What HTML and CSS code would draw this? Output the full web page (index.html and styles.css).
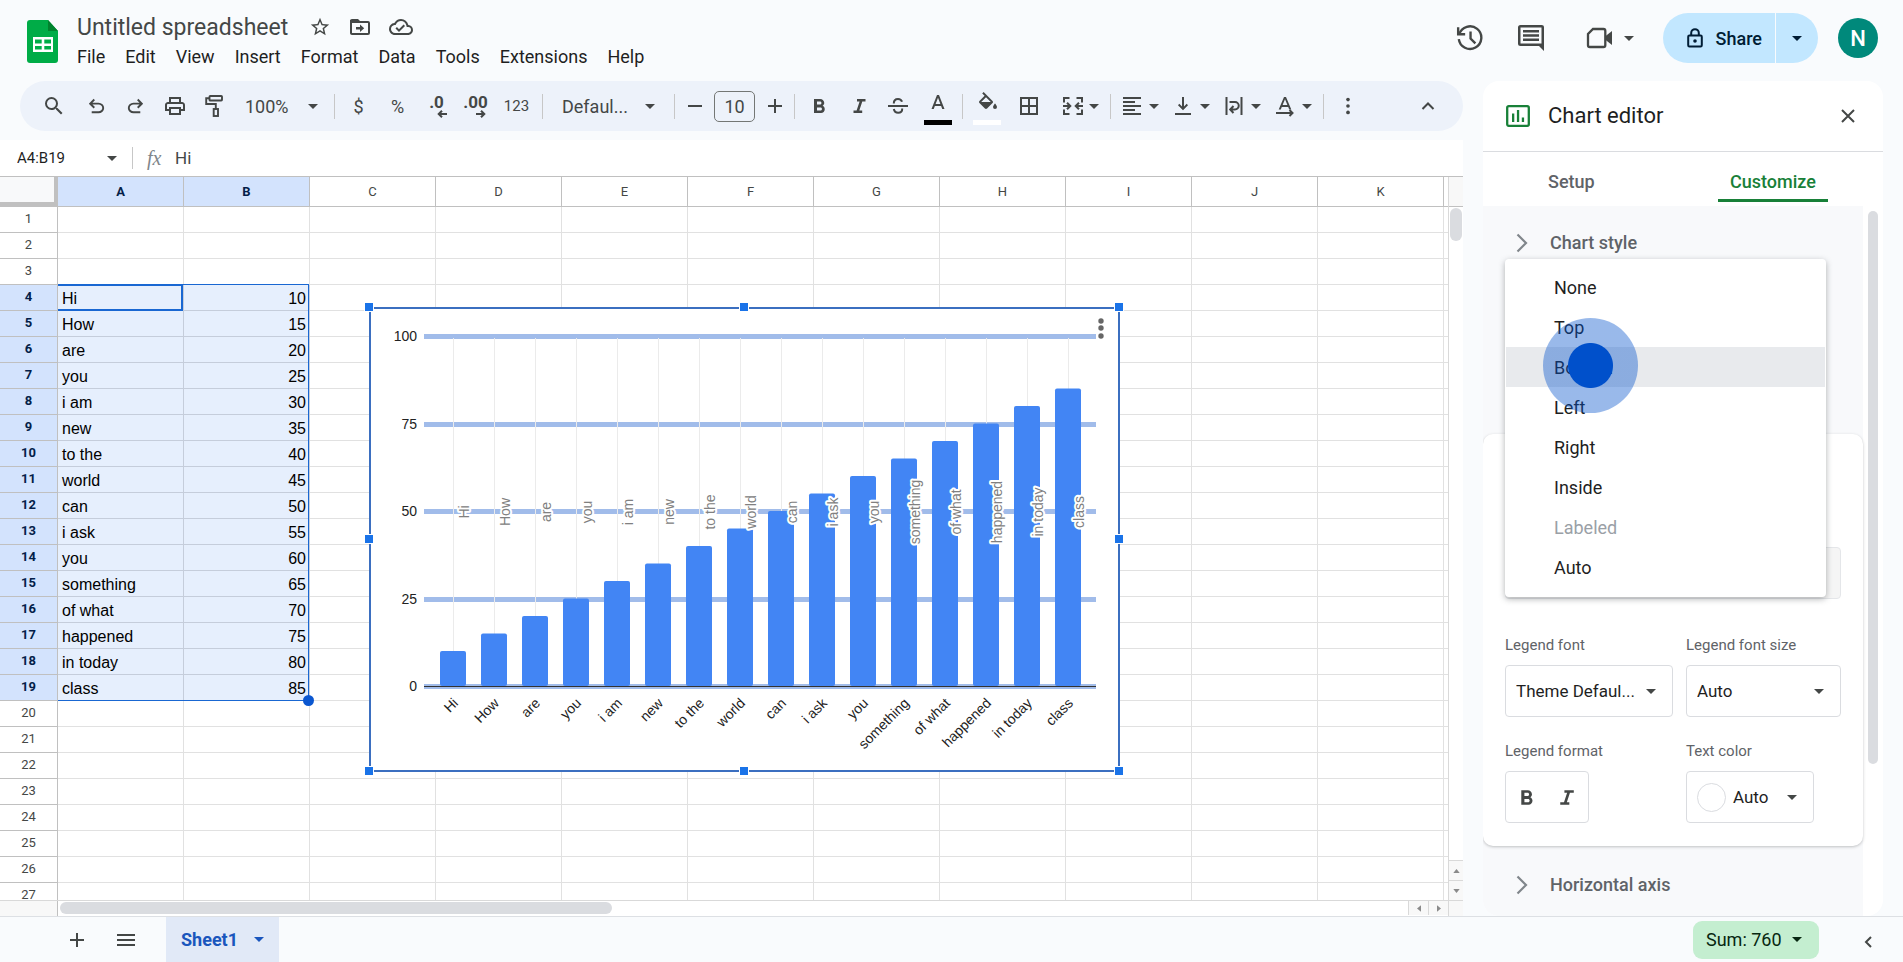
FILE: index.html
```html
<!DOCTYPE html>
<html lang="en">
<head>
  <meta charset="UTF-8">
  <meta name="viewport" content="width=device-width, initial-scale=1.0">
  <title>Untitled spreadsheet</title>
  <link rel="stylesheet" href="styles.css">
</head>
<body>
  <header class="topbar">
    <svg class="logo" viewBox="0 0 31 43" aria-hidden="true">
      <path d="M3 0h18l10 11v29a3 3 0 0 1-3 3H3a3 3 0 0 1-3-3V3a3 3 0 0 1 3-3z" fill="#00ac47"/>
      <path d="M21 0l10 11H21z" fill="#00832d"/>
      <path fill-rule="evenodd" d="M6 17h20v15H6zM8 19.500v4h6.700v-4zM17.300 19.500v4H24v-4zM8 26v3.500h6.700V26zM17.300 26v3.500H24V26z" fill="#fff"/>
    </svg>
    <div class="doc">
      <div class="doc-title">
        <h1>Untitled spreadsheet</h1>
        <button class="icon-btn" aria-label="Star"><svg viewBox="0 0 24 24" width="22" height="22"><path d="M22 9.240l-7.190-.62L12 2 9.190 8.630 2 9.240l5.460 4.730L5.820 21 12 17.270 18.180 21l-1.630-7.030L22 9.240zM12 15.400l-3.760 2.270 1-4.280-3.320-2.880 4.380-.38L12 6.100l1.710 4.040 4.380.38-3.320 2.880 1 4.280L12 15.400z"/></svg></button>
        <button class="icon-btn" aria-label="Move"><svg viewBox="0 0 24 24" width="24" height="24"><path d="M20 6h-8l-2-2H4a2 2 0 0 0-2 2v12c0 1.100.9 2 2 2h16a2 2 0 0 0 2-2V8a2 2 0 0 0-2-2zm0 12H4V8h16v10z"/><path d="M2 5h8v3H2zM8 12h4V9.500l4.200 3.700L12 17v-2.600H8z"/></svg></button>
        <button class="icon-btn" aria-label="Saved to Drive"><svg viewBox="0 0 24 24" width="24" height="24"><path d="M19.350 10.040A7.490 7.490 0 0 0 12 4C9.110 4 6.600 5.640 5.350 8.040A5.994 5.994 0 0 0 0 14c0 3.310 2.690 6 6 6h13c2.760 0 5-2.240 5-5 0-2.640-2.050-4.780-4.650-4.960zM19 18H6c-2.210 0-4-1.790-4-4 0-2.050 1.530-3.760 3.560-3.970l1.070-.11.5-.95A5.469 5.469 0 0 1 12 6c2.620 0 4.880 1.860 5.390 4.430l.3 1.500 1.530.11A2.980 2.980 0 0 1 22 15c0 1.650-1.350 3-3 3zm-9-3.820l-2.090-2.090L6.500 13.500 10 17l6.010-6.010-1.410-1.410z"/></svg></button>
      </div>
      <nav class="menus">
        <button>File</button>
        <button>Edit</button>
        <button>View</button>
        <button>Insert</button>
        <button>Format</button>
        <button>Data</button>
        <button>Tools</button>
        <button>Extensions</button>
        <button>Help</button>
      </nav>
    </div>
    <div class="actions">
      <button class="icon-btn" aria-label="Version history"><svg viewBox="0 0 26 26" width="28" height="28"><g fill="none" stroke="#444746" stroke-width="2.200"><path d="M3 9.500A10.500 10.500 0 1 1 2.600 14"/><path d="M2 3v6.500h6.500"/><path d="M13.500 7v6.500l4.500 4.500"/></g></svg></button>
      <button class="icon-btn comments" aria-label="Comments"><svg viewBox="0 0 26 26" width="26" height="26"><path fill-rule="evenodd" d="M2.500 0h21A2.500 2.500 0 0 1 26 2.500V26l-5-5H2.500A2.500 2.500 0 0 1 0 18.500v-16A2.500 2.500 0 0 1 2.500 0zm0 2.500v16h21v-16z"/><path d="M5 5h16v2.400H5zM5 9.300h16v2.400H5zM5 13.600h16V16H5z"/></svg></button>
      <button class="icon-btn meet" aria-label="Join a call"><svg viewBox="0 0 26 22" width="26" height="22"><path d="M7 2h10.500A1.800 1.800 0 0 1 19.300 3.800v14.400a1.800 1.800 0 0 1-1.800 1.800H3.800A1.800 1.800 0 0 1 2 18.200V7z" fill="none" stroke="#444746" stroke-width="2.300"/><path d="M19 9.500l7-5.500v14l-7-5.500z"/></svg><span class="caret"></span></button>
      <div class="share">
        <button class="share-main"><svg viewBox="0 0 16 20" width="16" height="20" aria-hidden="true"><rect x="1.200" y="7.500" width="13.600" height="11" rx="1.200" fill="none" stroke="#001d35" stroke-width="2"/><path d="M4.200 7V5a3.800 3.800 0 0 1 7.600 0v2" fill="none" stroke="#001d35" stroke-width="2"/><circle cx="8" cy="13" r="1.800" fill="#001d35"/></svg>Share</button>
        <button class="share-more" aria-label="Share options"><span class="caret"></span></button>
      </div>
      <button class="avatar">N</button>
    </div>
  </header>

  <main class="workspace">
    <section class="editor">
      <div class="toolbar">
        <button class="tool search" aria-label="Search"><svg viewBox="0 0 24 24" width="24" height="24"><path d="M15.500 14h-.79l-.28-.27A6.470 6.470 0 0 0 16 9.500 6.500 6.500 0 1 0 9.500 16c1.610 0 3.090-.59 4.230-1.570l.27.28v.79l5 4.990L20.490 19l-4.990-5zm-6 0a4.500 4.500 0 1 1 0-9 4.500 4.500 0 0 1 0 9z"/></svg></button>
        <button class="tool" aria-label="Undo"><svg viewBox="0 0 24 24" width="23" height="23"><path d="M7 19v-2h7.100q1.575 0 2.738-1T18 13.500t-1.162-2.500T14.100 10H7.800l2.600 2.600L9 14 4 9l5-5 1.400 1.400L7.800 8h6.300q2.425 0 4.163 1.575T20 13.500t-1.737 3.925T14.100 19Z"/></svg></button>
        <button class="tool" aria-label="Redo"><svg viewBox="0 0 24 24" width="23" height="23"><path d="M17 19v-2H9.900q-1.575 0-2.738-1T6 13.500 7.162 11 9.900 10h6.300l-2.600 2.600L15 14l5-5-5-5-1.400 1.400L16.200 8H9.900Q7.475 8 5.737 9.575T4 13.500t1.737 3.925T9.900 19Z"/></svg></button>
        <button class="tool" aria-label="Print"><svg viewBox="0 0 24 24" width="24" height="24"><path d="M19 8h-1V3H6v5H5c-1.660 0-3 1.340-3 3v6h4v4h12v-4h4v-6c0-1.660-1.340-3-3-3zM8 5h8v3H8V5zm8 12v2H8v-4h8v2zm2-2v-2H6v2H4v-4c0-.55.45-1 1-1h14c.55 0 1 .45 1 1v4h-2z"/></svg></button>
        <button class="tool" aria-label="Paint format"><svg viewBox="0 0 18 22" width="18" height="22"><g fill="none" stroke="#444746" stroke-width="1.900"><rect x="4.500" y="1" width="12.500" height="4.500" rx=".8"/><path d="M4.500 3.200H1.200V9h9.600v5"/><rect x="8.700" y="14" width="4.300" height="7"/></g></svg></button>
        <label class="pick zoom"><select aria-label="Zoom"><option>100%</option></select><span class="caret"></span></label>
        <i class="sep"></i>
        <button class="tool" aria-label="Currency">$</button>
        <button class="tool" aria-label="Percent">%</button>
        <button class="tool dec" aria-label="Decrease decimals"><b>.0</b><svg viewBox="0 0 10 8" width="10" height="8"><path d="M10 4H2M5 .7L1.700 4 5 7.300" fill="none" stroke="#444746" stroke-width="2"/></svg></button>
        <button class="tool dec" aria-label="Increase decimals"><b>.00</b><svg viewBox="0 0 10 8" width="10" height="8"><path d="M0 4h8M5 .7L8.300 4 5 7.300" fill="none" stroke="#444746" stroke-width="2"/></svg></button>
        <button class="tool formats" aria-label="More formats">123</button>
        <i class="sep"></i>
        <label class="pick font"><select aria-label="Font"><option>Defaul...</option></select><span class="caret"></span></label>
        <i class="sep"></i>
        <button class="tool step" aria-label="Smaller"><svg viewBox="0 0 14 14" width="14" height="14"><path d="M0 6h14v2H0z"/></svg></button>
        <input class="font-size" type="text" value="10" aria-label="Font size">
        <button class="tool step" aria-label="Larger"><svg viewBox="0 0 14 14" width="14" height="14"><path d="M0 6h6V0h2v6h6v2H8v6H6V8H0z"/></svg></button>
        <i class="sep"></i>
        <button class="tool wide" aria-label="Bold"><svg viewBox="0 0 24 24" width="24" height="24"><path d="M15.600 11.790c.97-.67 1.650-1.770 1.650-2.790 0-2.260-1.750-4-4-4H7v14h7.040c2.090 0 3.710-1.700 3.710-3.790 0-1.520-.86-2.820-2.150-3.420zM10 7.500h3c.83 0 1.500.67 1.500 1.500s-.67 1.500-1.500 1.500h-3v-3zm3.500 9H10v-3h3.500c.83 0 1.500.67 1.500 1.500s-.67 1.500-1.500 1.500z"/></svg></button>
        <button class="tool" aria-label="Italic"><svg viewBox="0 0 24 24" width="24" height="24"><path d="M10 5v2.400h2.600l-3 9.200H6.500V19h8.700v-2.400h-2.900l3-9.200h3.200V5z"/></svg></button>
        <button class="tool wide" aria-label="Strikethrough"><svg viewBox="0 0 24 24" width="24" height="24"><g fill="none" stroke="#444746" stroke-width="2"><path d="M2 12h20"/><path d="M7.800 9.500C7.800 6.500 9.500 5 12 5c2.200 0 3.500 1 4 2.800M7.800 15c.5 2.500 2 3.800 4.400 3.800 2.600 0 4.200-1.500 4-4.300"/></g></svg></button>
        <button class="tool wide color-tool" aria-label="Text color"><svg viewBox="0 0 24 24" width="24" height="24"><path d="M11 3L5.500 17h2.250l1.120-3h6.250l1.120 3h2.250L13 3h-2zm-1.380 9L12 5.670 14.380 12H9.620z"/></svg><span class="swatch black"></span></button>
        <i class="sep"></i>
        <button class="tool fill color-tool" aria-label="Fill color"><svg viewBox="0 0 24 24" width="24" height="24"><path d="M16.560 8.940L7.620 0 6.210 1.410l2.380 2.380-5.150 5.150a1.490 1.490 0 0 0 0 2.120l5.500 5.500c.29.29.68.44 1.060.44s.77-.15 1.060-.44l5.500-5.500c.59-.58.59-1.530 0-2.120zM5.210 10L10 5.210 14.790 10H5.210zM19 11.500s-2 2.170-2 3.500a2 2 0 0 0 4 0c0-1.330-2-3.500-2-3.500z"/></svg><span class="swatch white"></span></button>
        <button class="tool" aria-label="Borders"><svg viewBox="0 0 24 24" width="24" height="24"><path d="M3 3v18h18V3H3zm8 16H5v-6h6v6zm0-8H5V5h6v6zm8 8h-6v-6h6v6zm0-8h-6V5h6v6z"/></svg></button>
        <button class="tool drop merge" aria-label="Merge cells"><svg viewBox="0 0 24 24" width="24" height="24"><g fill="none" stroke="#444746" stroke-width="2"><path d="M8.500 4H3v4.500M8.500 20H3v-4.500M15.500 4H21v4.500M15.500 20H21v-4.500M2 12h7M22 12h-7M6 8.700L9.300 12 6 15.300M18 8.700L14.700 12l3.300 3.300"/></g></svg><span class="caret"></span></button>
        <i class="sep"></i>
        <button class="tool drop" aria-label="Horizontal align"><svg viewBox="0 0 24 24" width="24" height="24"><path d="M3 3h18v2H3zM3 7h12v2H3zM3 11h18v2H3zM3 15h12v2H3zM3 19h18v2H3z"/></svg><span class="caret"></span></button>
        <button class="tool drop" aria-label="Vertical align"><svg viewBox="0 0 24 24" width="24" height="24"><path d="M4 19h16v2H4zM11 3h2v9.500l2.700-2.700 1.300 1.400-5 5-5-5 1.300-1.400 2.700 2.700z"/></svg><span class="caret"></span></button>
        <button class="tool drop" aria-label="Text wrapping"><svg viewBox="0 0 24 24" width="24" height="24"><g fill="none" stroke="#444746" stroke-width="2"><path d="M4.500 3v18M19.500 3v18M7.500 8h5.500a3.500 3.500 0 0 1 0 7.500h-4M11.500 12l-3.300 3.500 3.300 3.500"/></g></svg><span class="caret"></span></button>
        <button class="tool drop" aria-label="Text rotation"><svg viewBox="0 0 24 24" width="24" height="24"><path d="M11 3L5.700 15.500h2.100l1-2.600h6.400l1 2.600h2.100L13 3zm-1.400 8L12 5.300 14.400 11z"/><path d="M3 19h16M16.500 16l3 3-3 3" fill="none" stroke="#444746" stroke-width="2"/></svg><span class="caret"></span></button>
        <i class="sep"></i>
        <button class="tool" aria-label="More"><svg viewBox="0 0 24 24" width="22" height="22"><circle cx="12" cy="5" r="2"/><circle cx="12" cy="12" r="2"/><circle cx="12" cy="19" r="2"/></svg></button>
        <button class="tool collapse" aria-label="Hide the menus"><svg viewBox="0 0 24 24" width="24" height="24"><path d="M6.500 15L12 9.500l5.500 5.500" fill="none" stroke="#444746" stroke-width="2"/></svg></button>
      </div>

      <div class="formula">
        <input class="name-box" type="text" value="A4:B19" aria-label="Name box">
        <span class="caret"></span>
        <i class="sep"></i>
        <span class="fx">fx</span>
        <input class="formula-input" type="text" value="Hi" aria-label="Formula">
      </div>

      <div class="grid-area">
        <div class="grid">
          <table class="cells">
            <thead><tr id="headRow"><th class="corner"></th></tr></thead>
            <tbody id="bodyRows"></tbody>
          </table>
          <div class="range"><span class="fill-handle"></span></div>
          <div class="active-cell"></div>
          <div class="chart">
            <svg id="chartSvg" viewBox="0 0 747 461" width="747" height="461" role="img" aria-label="Column chart"></svg>
            <span class="handle tl"></span><span class="handle tc"></span><span class="handle tr"></span>
            <span class="handle ml"></span><span class="handle mr"></span>
            <span class="handle bl"></span><span class="handle bc"></span><span class="handle br"></span>
          </div>
        </div>
        <div class="vscroll">
          <div class="vscroll-head"></div>
          <div class="vscroll-track"><div class="vthumb"></div></div>
          <button class="scroll-btn" aria-label="Scroll up"><svg viewBox="0 0 8 5" width="7" height="4"><path d="M0 5l4-5 4 5z"/></svg></button>
          <button class="scroll-btn" aria-label="Scroll down"><svg viewBox="0 0 8 5" width="7" height="4"><path d="M0 0l4 5 4-5z"/></svg></button>
        </div>
      </div>
      <div class="hscroll">
        <div class="hscroll-head"></div>
        <div class="hscroll-track"><div class="hthumb"></div></div>
        <button class="scroll-btn" aria-label="Scroll left"><svg viewBox="0 0 5 8" width="4" height="7"><path d="M5 0v8L0 4z"/></svg></button>
        <button class="scroll-btn" aria-label="Scroll right"><svg viewBox="0 0 5 8" width="4" height="7"><path d="M0 0v8l5-4z"/></svg></button>
        <div class="hscroll-end"></div>
      </div>
    </section>

    <aside class="panel">
      <div class="panel-head">
        <svg viewBox="0 0 24 22" width="24" height="22" aria-hidden="true"><rect x="1.200" y="1.200" width="21.600" height="19.600" rx="1.500" fill="none" stroke="#188038" stroke-width="2.300"/><path d="M6 8.500h2.300V17H6zM10.900 5h2.300v12h-2.300zM15.800 12.500h2.300V17h-2.300z" fill="#188038"/></svg>
        <h2>Chart editor</h2>
        <button class="icon-btn close" aria-label="Close"><svg viewBox="0 0 14 14" width="14" height="14"><path d="M1 1l12 12M13 1L1 13" fill="none" stroke="#444746" stroke-width="2"/></svg></button>
      </div>
      <div class="tabs">
        <button class="tab">Setup</button>
        <button class="tab selected">Customize</button>
      </div>
      <div class="panel-body">
        <div class="sections">
          <button class="section-row chart-style"><svg viewBox="0 0 12 20" width="12" height="20"><path d="M1.500 1.500L10 10l-8.500 8.500" fill="none" stroke="#80868b" stroke-width="2.200"/></svg>Chart style</button>
          <div class="legend-card">
            <div class="position-field">
              <select aria-label="Position" disabled><option></option></select>
              <div class="menu" role="listbox">
                <button role="option">None</button>
                <button role="option">Top</button>
                <button role="option" class="hover">Bottom</button>
                <button role="option">Left</button>
                <button role="option">Right</button>
                <button role="option">Inside</button>
                <button role="option" disabled>Labeled</button>
                <button role="option">Auto</button>
                <span class="click-mark"></span>
              </div>
            </div>
            <div class="fields">
              <div class="field">
                <label for="legendFont">Legend font</label>
                <div class="box"><select id="legendFont"><option>Theme Defaul...</option></select><span class="caret"></span></div>
              </div>
              <div class="field">
                <label for="legendSize">Legend font size</label>
                <div class="box"><select id="legendSize"><option>Auto</option></select><span class="caret"></span></div>
              </div>
              <div class="field">
                <span class="field-label">Legend format</span>
                <div class="box format-box">
                  <button class="icon-btn" aria-label="Bold"><svg viewBox="0 0 24 24" width="25" height="25"><path d="M15.600 11.790c.97-.67 1.650-1.770 1.650-2.790 0-2.260-1.750-4-4-4H7v14h7.040c2.090 0 3.710-1.700 3.710-3.790 0-1.520-.86-2.820-2.150-3.420zM10 7.500h3c.83 0 1.500.67 1.500 1.500s-.67 1.500-1.500 1.500h-3v-3zm3.500 9H10v-3h3.500c.83 0 1.500.67 1.500 1.500s-.67 1.500-1.500 1.500z"/></svg></button>
                  <button class="icon-btn" aria-label="Italic"><svg viewBox="0 0 24 24" width="25" height="25"><path d="M10 5v2.400h2.600l-3 9.200H6V19h8.700v-2.400h-2.400l3-9.200h3.700V5z"/></svg></button>
                </div>
              </div>
              <div class="field">
                <span class="field-label">Text color</span>
                <button class="box color-box"><span class="circle"></span>Auto<span class="caret"></span></button>
              </div>
            </div>
          </div>
          <button class="section-row"><svg viewBox="0 0 12 20" width="12" height="20"><path d="M1.500 1.500L10 10l-8.500 8.500" fill="none" stroke="#80868b" stroke-width="2.200"/></svg>Horizontal axis</button>
        </div>
        <div class="panel-scroll"><div class="panel-thumb"></div></div>
      </div>
    </aside>
  </main>

  <footer class="sheetbar">
    <button class="icon-btn" aria-label="Add sheet"><svg viewBox="0 0 14 14" width="14" height="14"><path d="M0 6h6V0h2v6h6v2H8v6H6V8H0z"/></svg></button>
    <button class="icon-btn" aria-label="All sheets"><svg viewBox="0 0 18 12" width="18" height="12"><path d="M0 0h18v2H0zM0 5h18v2H0zM0 10h18v2H0z"/></svg></button>
    <button class="sheet-tab">Sheet1<span class="caret"></span></button>
    <button class="sum">Sum: 760<span class="caret"></span></button>
    <button class="icon-btn side-toggle" aria-label="Show side panel"><svg viewBox="0 0 8 12" width="8" height="12"><path d="M7 1L2 6l5 5" fill="none" stroke="#444746" stroke-width="2"/></svg></button>
  </footer>

  <script src="script.js"></script>
</body>
</html>
```

FILE: styles.css
```css
* {
  box-sizing: border-box;
}
body {
  margin: 0;
  height: 100vh;
  display: flex;
  flex-direction: column;
  overflow: hidden;
  background: #f9fbfd;
  color: #1f1f1f;
  font-family: Roboto, "Liberation Sans", Arial, sans-serif;
  font-size: 18px;
}
button, input, select {
  margin: 0;
  padding: 0;
  border: 0;
  background: none;
  font: inherit;
  color: inherit;
}
select {
  appearance: none;
  outline: none;
}
svg {
  display: block;
  flex: none;
  fill: #444746;
}
.icon-btn {
  display: flex;
  align-items: center;
  justify-content: center;
}
.caret {
  flex: none;
  width: 0;
  height: 0;
  border: 5px solid transparent;
  border-top-color: #444746;
  border-bottom: 0;
  pointer-events: none;
}
.sep {
  flex: none;
  width: 1px;
  height: 25px;
  margin: 0 4px;
  background: #c7c7c7;
}

/* header */
.topbar {
  flex: none;
  height: 81px;
  display: flex;
  align-items: flex-start;
  padding: 0 25px 0 27px;
}
.logo {
  width: 31px;
  height: 43px;
  margin-top: 20px;
}
.doc {
  padding: 12px 0 0 19px;
}
.doc-title {
  display: flex;
  align-items: center;
  gap: 17px;
  height: 30px;
}
.doc-title h1 {
  margin: 0 4px 0 0;
  font-size: 23px;
  font-weight: 400;
  color: #444746;
}
.menus {
  display: flex;
  gap: 20px;
  margin-top: 4px;
}
.menus button {
  line-height: 22px;
}
.actions {
  margin-left: auto;
  display: flex;
  align-items: center;
  padding-top: 13px;
}
.actions > .icon-btn {
  margin-right: 34px;
}
.actions .comments {
  margin-right: 42px;
}
.actions .meet {
  gap: 12px;
  margin-right: 29px;
}
.share {
  display: flex;
  height: 50px;
  margin-right: 20px;
  color: #001d35;
  font-weight: 500;
}
.share button {
  display: flex;
  align-items: center;
  background: #c2e7ff;
}
.share .caret {
  border-top-color: #001d35;
}
.share-main {
  gap: 13px;
  padding: 0 13px 0 24px;
  border-radius: 25px 0 0 25px;
}
.share-more {
  width: 42px;
  margin-left: 1px;
  padding-left: 16px;
  border-radius: 0 25px 25px 0;
}
.avatar {
  width: 40px;
  height: 40px;
  border-radius: 50%;
  background: #00897b;
  color: #fff;
  font-size: 22px;
  font-weight: 500;
}

/* workspace */
.workspace {
  flex: 1;
  min-height: 0;
  display: flex;
  gap: 20px;
  padding-right: 20px;
}
.editor {
  flex: 1;
  min-width: 0;
  display: flex;
  flex-direction: column;
}
.toolbar {
  flex: none;
  display: flex;
  align-items: center;
  height: 50px;
  margin: 0 0 9px 20px;
  padding: 0 16px 0 14px;
  border-radius: 25px;
  background: #edf2fa;
  color: #444746;
  overflow: hidden;
}
.tool {
  flex: none;
  width: 39px;
  height: 38px;
  display: flex;
  align-items: center;
  justify-content: center;
}
.search {
  margin-right: 4px;
}
.dec {
  flex-direction: column;
  font-size: 17px;
  line-height: 16px;
}
.dec b {
  font-weight: 700;
}
.dec svg {
  align-self: flex-end;
  margin-right: 9px;
}
.formats {
  width: 43px;
  font-size: 15px;
}
.step {
  width: 31px;
}
.wide {
  width: 40px;
}
.fill {
  width: 42px;
}
.drop {
  width: 51px;
  gap: 5px;
  padding: 0 7px 0 5px;
}
.merge {
  width: 58px;
  padding: 0 7px 0 13px;
  gap: 4px;
}
.pick {
  flex: none;
  display: flex;
  align-items: center;
}
.pick select {
  flex: 1;
  min-width: 0;
}
.zoom {
  width: 97px;
  padding: 0 12px;
}
.font {
  width: 123px;
  padding: 0 15px;
}
.font-size {
  flex: none;
  width: 41px;
  height: 31px;
  margin: 0 4px;
  border: 1px solid #747775;
  border-radius: 5px;
  text-align: center;
}
.color-tool {
  position: relative;
}
.color-tool svg {
  margin-bottom: 5px;
}
.swatch {
  position: absolute;
  bottom: 0;
  left: 6px;
  width: 28px;
  height: 5px;
}
.black {
  background: #000;
}
.white {
  background: #fff;
}
.collapse {
  margin-left: auto;
}

.formula {
  flex: none;
  display: flex;
  align-items: center;
  height: 37px;
  padding-left: 17px;
  background: #fff;
  border-bottom: 1px solid #c0c0c0;
}
.name-box {
  width: 90px;
  font-size: 15px;
}
.formula .sep {
  height: 22px;
  margin: 0 14px 0 15px;
}
.fx {
  width: 28px;
  font: italic 20px "Liberation Serif", serif;
  color: #80868b;
}
.formula-input {
  flex: 1;
  min-width: 0;
  font-size: 17px;
  color: #444746;
}

/* cells */
.grid-area {
  flex: 1;
  min-height: 0;
  display: flex;
  background: #fff;
}
.grid {
  flex: 1;
  min-width: 0;
  position: relative;
  overflow: hidden;
}
.cells {
  table-layout: fixed;
  width: 1570px;
  border-spacing: 0;
}
.cells th, .cells td {
  width: 126px;
  height: 26px;
  padding: 2px 3px 0 4px;
  border-right: 1px solid #e1e1e1;
  border-bottom: 1px solid #e1e1e1;
  font: 16px/23px "Liberation Sans", Arial, sans-serif;
  color: #000;
  white-space: nowrap;
}
.cells th {
  padding: 0 3px;
  border-color: #c0c0c0;
  font: 13px/23px Roboto, "Liberation Sans", sans-serif;
  color: #444746;
}
.cells thead th {
  height: 30px;
  line-height: 28px;
}
.cells .corner, .cells tbody th {
  width: 58px;
}
.cells .corner {
  background: #f8f9fa;
  border-right: 4px solid #c0c0c0;
  border-bottom: 5px solid #c0c0c0;
}
.cells tbody th {
  vertical-align: top;
}
.cells th.on {
  background: #d3e3fd;
  color: #041e49;
  font-weight: 700;
}
.cells td.on {
  background: #e6effd;
  border-color: #c5cddb;
}
.cells .num {
  text-align: right;
}
.range {
  position: absolute;
  left: 58px;
  top: 107px;
  width: 251px;
  height: 417px;
  border: 1px solid #1967d2;
  border-left: 0;
}
.fill-handle {
  position: absolute;
  right: -6px;
  bottom: -6px;
  width: 11px;
  height: 11px;
  border-radius: 50%;
  background: #0b57d0;
}
.active-cell {
  position: absolute;
  left: 58px;
  top: 107px;
  width: 125px;
  height: 27px;
  border: 2px solid #1967d2;
  border-left: 0;
}

/* chart over the cells */
.chart {
  position: absolute;
  left: 369px;
  top: 130px;
  width: 751px;
  height: 465px;
  border: 2px solid #3b6fc0;
  background: #fff;
}
.chart text {
  font: 14px "Liberation Sans", Arial, sans-serif;
  fill: #222;
}
.chart .legend-text {
  fill: #808080;
  stroke: #fff;
  stroke-width: 4px;
  stroke-linejoin: round;
  paint-order: stroke;
}
.chart .h-line {
  fill: #a1bcea;
}
.chart .v-line {
  fill: #ebebeb;
}
.chart .bar {
  fill: #4285f4;
}
.chart .axis {
  fill: #333;
}
.handle {
  position: absolute;
  width: 10px;
  height: 10px;
  border: 1px solid #fff;
  background: #1a73e8;
}
.tl, .tc, .tr {
  top: -7px;
}
.ml, .mr {
  top: 225px;
}
.bl, .bc, .br {
  bottom: -6px;
}
.tl, .ml, .bl {
  left: -7px;
}
.tc, .bc {
  left: 368px;
}
.tr, .mr, .br {
  right: -6px;
}

/* scroll bars */
.vscroll {
  flex: none;
  width: 15px;
  display: flex;
  flex-direction: column;
  border-left: 1px solid #d9d9d9;
}
.vscroll-head {
  height: 30px;
  background: #f8f8f8;
  border-bottom: 1px solid #c0c0c0;
}
.vscroll-track {
  flex: 1;
  padding: 1px;
}
.vthumb {
  height: 33px;
  border-radius: 6px;
  background: #dadce0;
}
.scroll-btn {
  display: flex;
  align-items: center;
  justify-content: center;
  height: 20px;
  background: #f8f8f8;
  border-top: 1px solid #d9d9d9;
}
.scroll-btn svg {
  fill: #8a8a8a;
}
.hscroll {
  flex: none;
  display: flex;
  height: 16px;
  background: #fff;
  border-top: 1px solid #d9d9d9;
}
.hscroll .scroll-btn {
  width: 20px;
  height: 14px;
  border-top: 0;
  border-left: 1px solid #d9d9d9;
}
.hscroll-head {
  width: 58px;
  background: #f8f8f8;
  border-right: 1px solid #c0c0c0;
}
.hscroll-track {
  flex: 1;
  padding: 1px 2px;
}
.hthumb {
  width: 41%;
  height: 12px;
  border-radius: 6px;
  background: #dadce0;
}
.hscroll-end {
  width: 15px;
  border-left: 1px solid #d9d9d9;
  background: #f8f8f8;
}

/* chart editor */
.panel {
  flex: none;
  width: 400px;
  display: flex;
  flex-direction: column;
  background: #fff;
  border-radius: 16px;
  overflow: hidden;
}
.panel-head {
  flex: none;
  display: flex;
  align-items: center;
  height: 71px;
  padding: 0 28px 0 23px;
  border-bottom: 1px solid #dadce0;
}
.panel-head h2 {
  margin: 0 0 2px 18px;
  font-size: 22px;
  font-weight: 400;
}
.close {
  margin-left: auto;
}
.tabs {
  flex: none;
  display: flex;
  justify-content: space-between;
  height: 54px;
  padding: 11px 55px 4px 65px;
}
.tab {
  color: #5f6368;
  font-weight: 500;
  border-bottom: 3px solid transparent;
}
.tab.selected {
  width: 110px;
  color: #188038;
  border-color: #188038;
}
.panel-body {
  flex: 1;
  min-height: 0;
  display: flex;
  overflow: hidden;
}
.sections {
  flex: 1;
  background: #f8f9fb;
}
.section-row {
  display: flex;
  align-items: center;
  gap: 22px;
  width: 100%;
  height: 73px;
  padding-left: 33px;
  color: #5f6368;
  font-weight: 500;
}
.chart-style {
  margin-bottom: 155px;
}
.legend-card {
  margin-bottom: 2px;
  padding: 113px 22px 23px;
  border-radius: 10px;
  background: #fff;
  box-shadow: 0 1px 3px rgba(60, 64, 67, 0.3);
}
.position-field {
  position: relative;
}
.position-field select {
  display: block;
  width: 100%;
  height: 52px;
  border: 1px solid #dadce0;
  border-radius: 4px;
  background: #f1f1f1;
}
.menu {
  position: absolute;
  z-index: 2;
  left: 0;
  bottom: 2px;
  width: 321px;
  padding: 8px 1px 10px;
  border-radius: 4px;
  background: #fff;
  box-shadow: 0 2px 6px rgba(60, 64, 67, 0.4);
}
.menu button {
  display: block;
  width: 100%;
  height: 40px;
  padding-left: 48px;
  text-align: left;
}
.menu button:disabled {
  color: #9aa0a6;
}
.menu .hover {
  background: #e8eaed;
}
/* pointer highlight: solid dot inside a translucent ring */
.click-mark {
  position: absolute;
  left: 38px;
  top: 59px;
  width: 95px;
  height: 95px;
  border-radius: 50%;
  background: radial-gradient(circle, #0050cb 22px, rgba(0, 80, 203, 0.4) 23px);
}
.fields {
  display: grid;
  grid-template-columns: 168fr 155fr;
  gap: 24px 13px;
  margin-top: 36px;
}
.field label, .field-label {
  display: block;
  margin-bottom: 10px;
  font-size: 15px;
  line-height: 20px;
  color: #5f6368;
}
.box {
  display: flex;
  align-items: center;
  height: 52px;
  border: 1px solid #dadce0;
  border-radius: 4px;
  padding: 0 16px 0 10px;
  font-size: 17px;
}
.box select {
  flex: 1;
  min-width: 0;
}
.format-box {
  width: 84px;
  padding: 0 8px;
  gap: 15px;
}
.color-box {
  width: 128px;
  gap: 7px;
}
.color-box .caret {
  margin-left: auto;
}
.circle {
  width: 29px;
  height: 29px;
  border: 1px solid #dadce0;
  border-radius: 50%;
}
.panel-scroll {
  flex: none;
  width: 20px;
  padding: 5px;
}
.panel-thumb {
  height: 79%;
  border-radius: 5px;
  background: #dadce0;
}

/* bottom bar */
.sheetbar {
  flex: none;
  display: flex;
  align-items: center;
  height: 46px;
  padding: 0 31px 0 70px;
  border-top: 1px solid #dde0e4;
}
.sheetbar > .icon-btn + .icon-btn {
  margin: 0 31px 0 33px;
}
.sheet-tab {
  display: flex;
  align-items: center;
  justify-content: space-between;
  width: 113px;
  height: 100%;
  padding: 0 15px;
  background: #e1e9f7;
  color: #1a56bd;
  font-weight: 700;
}
.sheet-tab .caret {
  border-top-color: #1a56bd;
}
.sum {
  display: flex;
  align-items: center;
  justify-content: space-between;
  width: 126px;
  height: 38px;
  margin-left: auto;
  padding: 0 17px 0 13px;
  border-radius: 9px;
  background: #c4eed0;
  color: #072711;
}
.sum .caret {
  border-top-color: #072711;
}
.side-toggle {
  margin-left: 45px;
  padding-top: 4px;
}
```

FILE: script.js
```javascript
const data = [
  ["Hi", 10], ["How", 15], ["are", 20], ["you", 25],
  ["i am", 30], ["new", 35], ["to the", 40], ["world", 45],
  ["can", 50], ["i ask", 55], ["you", 60], ["something", 65],
  ["of what", 70], ["happened", 75], ["in today", 80], ["class", 85]
];
const columns = [..."ABCDEFGHIJK", ""];
const firstRow = 4;
const lastRow = firstRow + data.length - 1;

// column and row headings, then the cells
const headRow = document.getElementById("headRow");
columns.forEach((name, i) => {
  headRow.insertAdjacentHTML("beforeend", `<th${i < 2 ? ' class="on"' : ""}>${name}</th>`);
});

const bodyRows = document.getElementById("bodyRows");
let rows = "";
for (let r = 1; r <= 27; r++) {
  const on = r >= firstRow && r <= lastRow;
  const item = on ? data[r - firstRow] : ["", ""];
  rows += `<tr><th${on ? ' class="on"' : ""}>${r}</th>`;
  columns.forEach((name, i) => {
    if (i < 2) {
      rows += `<td class="${on ? "on" : ""}${i === 1 ? " num" : ""}">${item[i]}</td>`;
    } else {
      rows += "<td></td>";
    }
  });
  rows += "</tr>";
}
bodyRows.innerHTML = rows;

// chart
const left = 53;
const right = 725;
const base = 377;
const unit = 3.5;
const step = 41;
const firstX = 82;
let out = "";

[0, 25, 50, 75, 100].forEach(v => {
  const y = base - v * unit;
  out += `<rect class="h-line" x="${left}" y="${Math.round(y) - 2}" width="${right - left}" height="5"/>`;
  out += `<text x="46" y="${y + 5}" text-anchor="end">${v}</text>`;
});

data.forEach(([label, value], i) => {
  const x = firstX + i * step;
  const h = value * unit;
  out += `<rect class="v-line" x="${x}" y="${base - 348}" width="1" height="348"/>`;
  out += `<rect class="bar" x="${x - 13}" y="${base - h}" width="26" height="${h}" rx="2"/>`;
  out += `<text text-anchor="end" transform="translate(${x + 6} ${base + 18}) rotate(-45)">${label}</text>`;
});
out += `<rect class="axis" x="${left}" y="${base}" width="${right - left}" height="1"/>`;

data.forEach(([label], i) => {
  const x = firstX + i * step + 16;
  out += `<text class="legend-text" text-anchor="middle" transform="translate(${x} 203) rotate(-90)">${label}</text>`;
});

[12, 19, 27].forEach(y => {
  out += `<circle cx="730" cy="${y}" r="2.700" fill="#666"/>`;
});
document.getElementById("chartSvg").innerHTML = out;
```
